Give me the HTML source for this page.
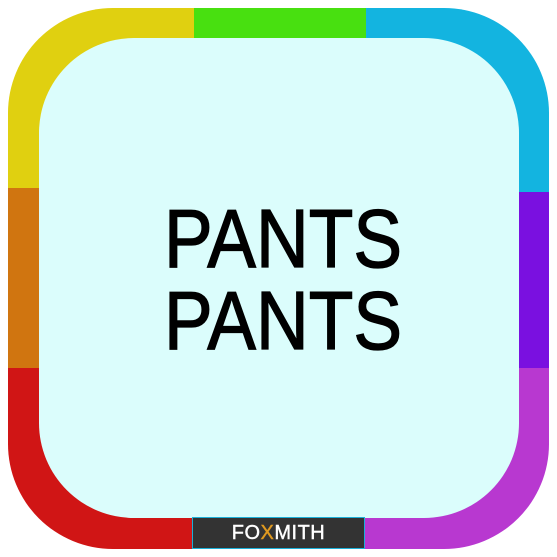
<!DOCTYPE html>
<html><head><style>
html,body{margin:0;padding:0;width:557px;height:557px;background:#fff;overflow:hidden}
.o{position:absolute;left:8px;top:8px;width:541px;height:541px;border-radius:105px;overflow:hidden}
.o div{position:absolute}
.in{position:absolute;left:39px;top:38px;width:480px;height:480px;border-radius:95px;background:#dbfdfc}
.t{position:absolute;left:4px;width:557px;text-align:center;font-family:"Liberation Sans",sans-serif;font-size:83px;line-height:83px;color:#000;-webkit-text-stroke:1.3px #000;transform:scaleX(0.88);transform-origin:283px 0}
.box{position:absolute;left:192px;top:517px;width:171px;height:30px;background:#333;border:1px solid #1cb0d8;text-align:center;font-family:"Liberation Sans",sans-serif;font-size:20px;line-height:30px;color:#fff;letter-spacing:0.5px;-webkit-text-stroke:0.4px #fff}
</style></head><body>
<div class="o">
<div style="left:0;top:0;width:186px;height:180px;background:#e0d010"></div>
<div style="left:186px;top:0;width:172px;height:180px;background:#48e010"></div>
<div style="left:358px;top:0;width:183px;height:184px;background:#13b4e0"></div>
<div style="left:0;top:180px;width:271px;height:180px;background:#d07510"></div>
<div style="left:271px;top:184px;width:270px;height:176px;background:#7a10e0"></div>
<div style="left:0;top:360px;width:271px;height:181px;background:#d01515"></div>
<div style="left:271px;top:360px;width:270px;height:181px;background:#b838d0"></div>
</div>
<div class="in"></div>
<div class="t" style="top:197px">PANTS</div>
<div class="t" style="top:279px">PANTS</div>
<div class="box">FO<span style="color:#e09a20;-webkit-text-stroke-color:#e09a20">X</span>MITH</div>
</body></html>
